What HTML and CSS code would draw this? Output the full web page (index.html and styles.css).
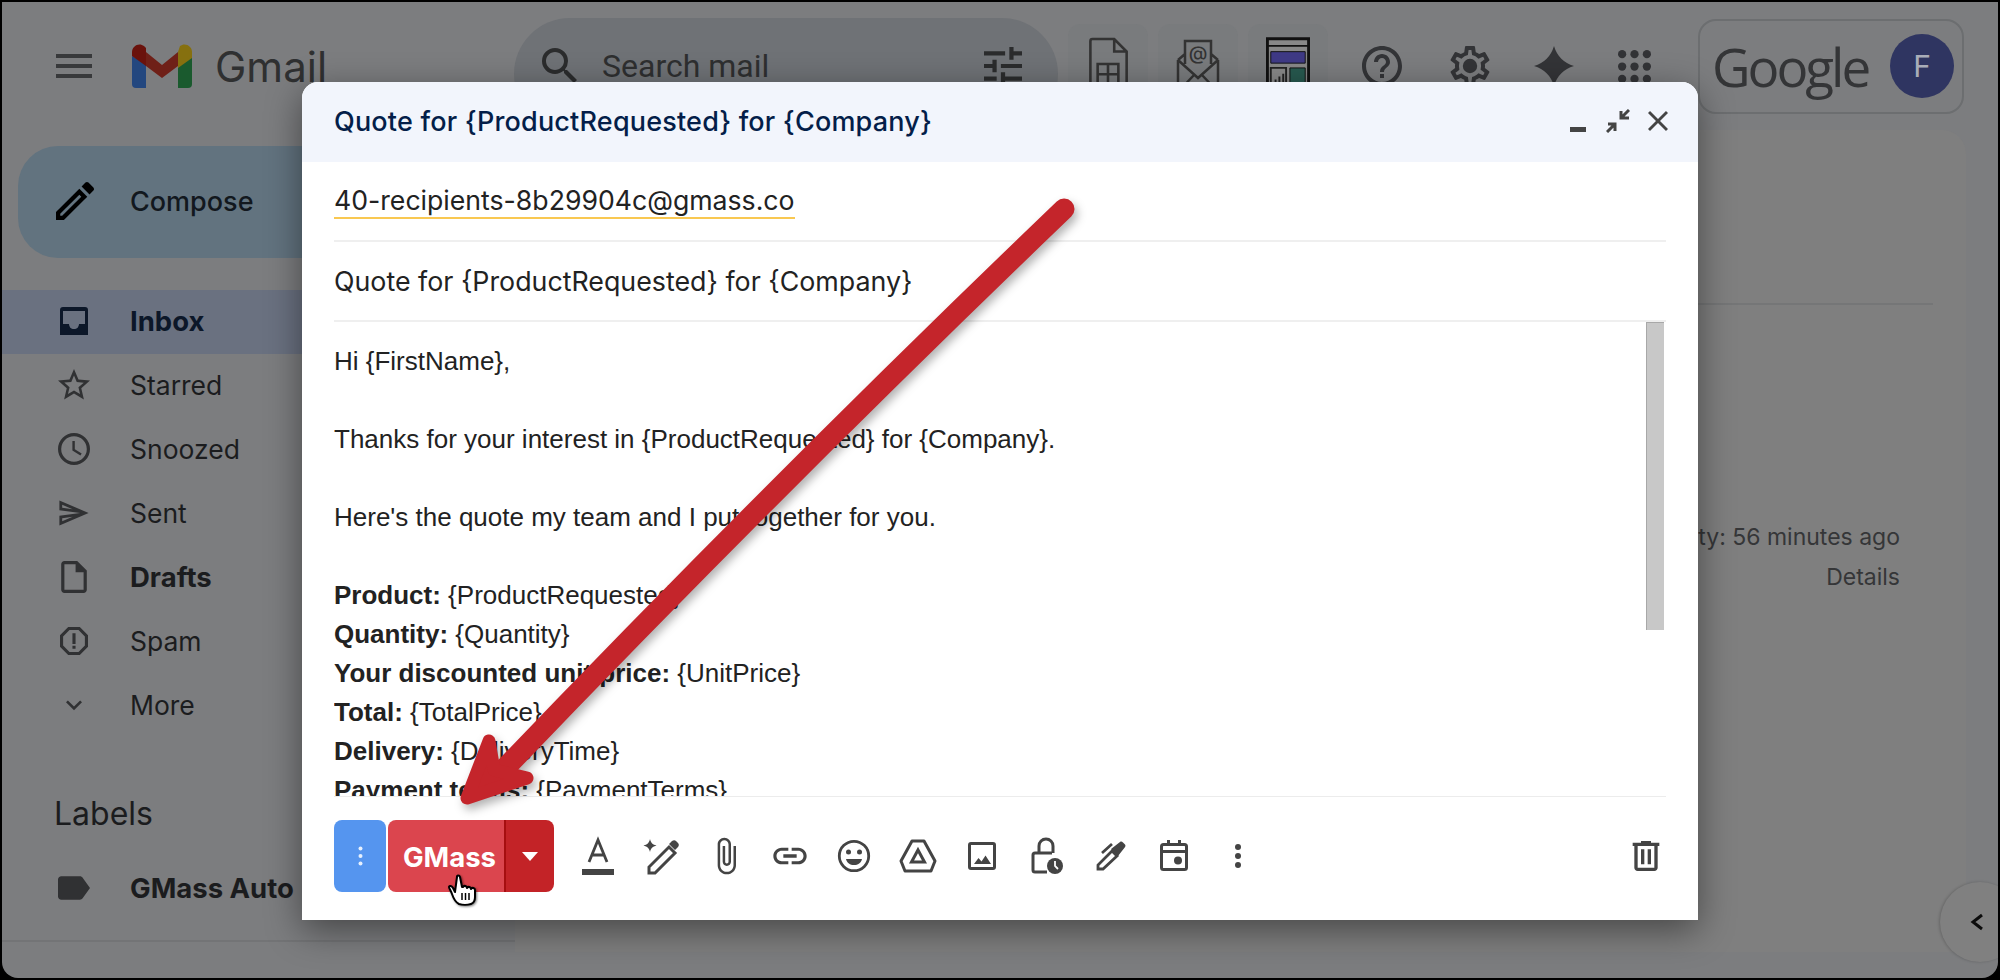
FILE: index.html
```html
<!DOCTYPE html>
<html lang="en">
<head>
    <meta charset="UTF-8">
    <title>Gmail - Quote for {ProductRequested}</title>
    <link rel="stylesheet" href="styles.css">
</head>
<body>
<div class="window">
    <header class="topbar">
        <div class="brand">
            <svg class="menu-icon" viewBox="0 0 36 24"><path d="M0 0h36v4H0zM0 10h36v4H0zM0 20h36v4H0z"/></svg>
            <svg class="gmail-logo" viewBox="0 0 60 44">
                <path fill="#23477f" d="M0 12v28a4 4 0 0 0 4 4h10V20z"/>
                <path fill="#1a5a2e" d="M60 12v28a4 4 0 0 1-4 4H46V20z"/>
                <path fill="#86700f" d="M46 8v16L60 14V8C60 2 53-2 48 2z"/>
                <path fill="#6f2018" d="M14 8 30 21 46 8v14L30 34 14 22z"/>
                <path fill="#6a120c" d="M0 8c0-6 7-10 12-6l2 2v18L0 12z"/>
            </svg>
            <span class="gmail-word">Gmail</span>
        </div>
        <div class="search">
            <svg class="search-icon" viewBox="3 3 18 18"><path d="M15.5 14h-.79l-.28-.27A6.471 6.471 0 0 0 16 9.5 6.5 6.5 0 1 0 9.5 16c1.61 0 3.09-.59 4.23-1.57l.27.28v.79l5 4.99L20.49 19l-4.99-5zm-6 0C7.01 14 5 11.99 5 9.5S7.01 5 9.5 5 14 7.01 14 9.5 11.99 14 9.5 14z"/></svg>
            <span class="search-text">Search mail</span>
            <svg class="tune-icon" viewBox="3 3 18 18"><path d="M3 17v2h6v-2H3zM3 5v2h10V5H3zm10 16v-2h8v-2h-8v-2h-2v6h2zM7 9v2H3v2h4v2h2V9H7zm14 4v-2H11v2h10zm-6-4h2V7h4V5h-4V3h-2v6z"/></svg>
        </div>
        <div class="addons">
            <div class="addon">
                <svg viewBox="0 0 40 56" class="addon-icon"><path fill="none" stroke="#333" stroke-width="2.5" d="M5 2h21l12 12v38a2 2 0 0 1-2 2H5a2 2 0 0 1-2-2V4a2 2 0 0 1 2-2zM26 2v12h12"/><path fill="none" stroke="#333" stroke-width="2.5" d="M10 26h20v20H10zM10 36h20M20 26v20"/></svg>
            </div>
            <div class="addon">
                <svg viewBox="0 0 44 56" class="addon-icon"><path fill="none" stroke="#333" stroke-width="2.5" d="M9 26V3h26v23M2 22l7-6M42 22l-7-6M2 22v32h40V22M2 22l20 18 20-18M2 54l16-17M42 54 26 37"/><text x="22" y="22" class="addon-at">@</text></svg>
            </div>
            <div class="addon">
                <svg viewBox="0 0 46 60" class="addon-icon"><path fill="#888" stroke="#111" stroke-width="3" d="M1.500 1.500h43v57h-43z"/><path fill="none" stroke="#111" stroke-width="2" d="M2 9h42"/><path fill="#3f3a86" stroke="#111" stroke-width="1" d="M5 15h36v12H5z"/><path fill="#27594f" stroke="#111" stroke-width="1" d="M25 32h16v24H25z"/><path fill="none" stroke="#222" stroke-width="2" d="M5 32h16v24H5zM10 50v-6M14 50v-9M18 50v-12"/></svg>
            </div>
        </div>
        <div class="tools">
            <div class="tool">
                <svg viewBox="2 2 20 20"><path d="M11 18h2v-2h-2v2zm1-16C6.480 2 2 6.480 2 12s4.480 10 10 10 10-4.480 10-10S17.520 2 12 2zm0 18c-4.410 0-8-3.590-8-8s3.590-8 8-8 8 3.590 8 8-3.590 8-8 8zm0-14c-2.210 0-4 1.790-4 4h2c0-1.100.9-2 2-2s2 .9 2 2c0 2-3 1.750-3 5h2c0-2.250 3-2.500 3-5 0-2.210-1.790-4-4-4z"/></svg>
            </div>
            <div class="tool tool-gear">
                <svg viewBox="2 2 20 20"><path d="M19.430 12.980c.04-.32.07-.64.07-.98 0-.34-.03-.66-.07-.98l2.110-1.650c.19-.15.24-.42.12-.64l-2-3.460c-.09-.16-.26-.25-.44-.25-.06 0-.12.01-.17.03l-2.490 1c-.52-.4-1.080-.73-1.690-.98l-.38-2.650C14.460 2.180 14.250 2 14 2h-4c-.25 0-.46.18-.49.42l-.38 2.650c-.61.25-1.170.59-1.690.98l-2.490-1c-.06-.02-.12-.03-.18-.03-.17 0-.34.09-.43.25l-2 3.460c-.13.22-.07.49.12.64l2.110 1.650c-.04.32-.07.65-.07.98 0 .33.03.66.07.98l-2.110 1.650c-.19.15-.24.42-.12.64l2 3.460c.09.16.26.25.44.25.06 0 .12-.01.17-.03l2.490-1c.52.4 1.080.73 1.690.98l.38 2.650c.03.24.24.42.49.42h4c.25 0 .46-.18.49-.42l.38-2.650c.61-.25 1.170-.59 1.690-.98l2.490 1c.06.02.12.03.18.03.17 0 .34-.09.43-.25l2-3.460c.12-.22.07-.49-.12-.64l-2.110-1.650zm-1.980-1.710c.04.31.05.52.05.73 0 .21-.02.43-.05.73l-.14 1.130.89.7 1.080.84-.7 1.210-1.270-.51-1.040-.42-.9.68c-.43.32-.84.56-1.250.73l-1.060.43-.16 1.130-.2 1.350h-1.400l-.19-1.350-.16-1.130-1.060-.43c-.43-.18-.83-.41-1.230-.71l-.91-.7-1.060.43-1.270.51-.7-1.210 1.080-.84.89-.7-.14-1.130c-.03-.31-.05-.54-.05-.74s.02-.43.05-.73l.14-1.130-.89-.7-1.080-.84.7-1.210 1.270.51 1.040.42.9-.68c.43-.32.84-.56 1.250-.73l1.060-.43.16-1.130.2-1.350h1.390l.19 1.350.16 1.130 1.060.43c.43.18.83.41 1.230.71l.91.7 1.060-.43 1.270-.51.7 1.210-1.070.85-.89.7.14 1.130z"/><circle cx="12" cy="12" r="3.600"/></svg>
            </div>
            <div class="tool">
                <svg viewBox="2 2 20 20"><path d="M12 2Q14.300 9.700 22 12 14.300 14.300 12 22 9.700 14.300 2 12 9.700 9.700 12 2z"/></svg>
            </div>
            <div class="tool tool-apps">
                <svg class="apps-icon" viewBox="0 0 32 32"><circle cx="4" cy="4" r="4"/><circle cx="16" cy="4" r="4"/><circle cx="28" cy="4" r="4"/><circle cx="4" cy="16" r="4"/><circle cx="16" cy="16" r="4"/><circle cx="28" cy="16" r="4"/><circle cx="4" cy="28" r="4"/><circle cx="16" cy="28" r="4"/><circle cx="28" cy="28" r="4"/></svg>
            </div>
        </div>
        <div class="account">
            <span class="google-word">Google</span>
            <span class="avatar">F</span>
        </div>
    </header>

    <div class="content">
        <aside class="sidebar">
            <div class="compose">
                <svg viewBox="3 3 18 18"><path d="M3 17.250V21h3.750L17.810 9.940l-3.750-3.750L3 17.250zM5.920 19H5v-.92l9.060-9.060.92.92L5.920 19zM20.710 5.630l-2.340-2.340c-.2-.2-.45-.29-.71-.29s-.51.1-.7.29l-1.830 1.830 3.750 3.750 1.830-1.830c.39-.39.39-1.020 0-1.410z"/></svg>
                <span>Compose</span>
            </div>
            <nav class="nav">
                <div class="nav-row nav-active">
                    <svg viewBox="0 0 28 28"><path fill-rule="evenodd" d="M3 0h22a3 3 0 0 1 3 3v22a3 3 0 0 1-3 3H3a3 3 0 0 1-3-3V3a3 3 0 0 1 3-3zM3 4v14h6c0 3 2 5 5 5s5-2 5-5h6V4z"/><path d="M0 17h9c0 3 2 5 5 5s5-2 5-5h9v11H0z"/></svg>
                    <span>Inbox</span>
                </div>
                <div class="nav-row">
                    <svg viewBox="2 2 20 20"><path d="M22 9.240l-7.190-.62L12 2 9.190 8.630 2 9.240l5.460 4.730L5.820 21 12 17.270 18.180 21l-1.630-7.030L22 9.240zM12 15.400l-3.760 2.270 1-4.280-3.320-2.880 4.380-.38L12 6.100l1.710 4.040 4.380.38-3.320 2.880 1 4.280L12 15.400z"/></svg>
                    <span>Starred</span>
                </div>
                <div class="nav-row">
                    <svg viewBox="2 2 20 20"><path d="M12 2a10 10 0 1 0 0 20 10 10 0 0 0 0-20zm0 18a8 8 0 1 1 0-16 8 8 0 0 1 0 16zm.5-13H11v6l5 3 .8-1.200-4.300-2.600z"/></svg>
                    <span>Snoozed</span>
                </div>
                <div class="nav-row">
                    <svg viewBox="1 2 23 20"><path d="M4.010 6.030l7.510 3.220-7.520-1 .01-2.220m7.500 8.720L4 17.970v-2.220l7.510-1M2.010 3L2 10l15 2-15 2 .01 7L23 12 2.010 3z"/></svg>
                    <span>Sent</span>
                </div>
                <div class="nav-row nav-bold">
                    <svg viewBox="2 2 20 20"><path d="M6 2c-1.100 0-2 .9-2 2v16c0 1.100.9 2 2 2h12c1.100 0 2-.9 2-2V8l-6-6H6zm0 18V4h7v5h5v11H6z"/></svg>
                    <span>Drafts</span>
                </div>
                <div class="nav-row">
                    <svg viewBox="3 3 18 18" class="nav-icon-small"><path d="M15.730 3H8.270L3 8.270v7.460L8.270 21h7.460L21 15.730V8.270L15.730 3zM19 14.900 14.900 19H9.100L5 14.900V9.100L9.100 5h5.800L19 9.100v5.800zM11 7h2v7h-2zm0 8h2v2h-2z"/></svg>
                    <span>Spam</span>
                </div>
                <div class="nav-row">
                    <svg viewBox="0 0 24 24"><path d="M7.410 8.590 12 13.170l4.590-4.580L18 10l-6 6-6-6z"/></svg>
                    <span>More</span>
                </div>
            </nav>
            <div class="labels-title">Labels</div>
            <div class="nav-row nav-bold">
                <svg viewBox="3 5 19 14" class="label-icon"><path d="M17.630 5.840C17.270 5.330 16.670 5 16 5L5 5.010C3.900 5.010 3 5.900 3 7v10c0 1.100.9 1.990 2 1.990L16 19c.67 0 1.270-.33 1.630-.84L22 12l-4.370-6.160z"/></svg>
                <span>GMass Auto</span>
            </div>
            <div class="sidebar-foot"></div>
        </aside>
        <main class="mail-card">
            <div class="mail-rule"></div>
            <div class="mail-meta">
                <div>Last account activity: 56 minutes ago</div>
                <div>Details</div>
            </div>
        </main>
    </div>

    <div class="side-toggle">
        <svg viewBox="0 0 14 18"><path fill="none" stroke="#0c0c0c" stroke-width="3" d="M12 2 3 9l9 7"/></svg>
    </div>

    <section class="modal">
        <div class="modal-head">
            <span class="modal-title">Quote for {ProductRequested} for {Company}</span>
            <div class="modal-actions">
                <svg class="act-min" viewBox="0 0 16 5"><path d="M0 0h16v5H0z"/></svg>
                <svg class="act-collapse" viewBox="0 0 24 24"><path fill="none" stroke="#444" stroke-width="3" d="M23 1 15 9M15 2v7h8M1 23l8-8M9 22v-7H2"/></svg>
                <svg class="act-close" viewBox="5 5 14 14"><path d="M19 6.410 17.590 5 12 10.590 6.410 5 5 6.410 10.590 12 5 17.590 6.410 19 12 13.410 17.590 19 19 17.590 13.410 12z"/></svg>
            </div>
        </div>
        <div class="field">
            <span class="recipient">40-recipients-8b29904c@gmass.co</span>
        </div>
        <div class="field">
            <span>Quote for {ProductRequested} for {Company}</span>
        </div>
        <div class="body-row">
            <div class="message">
                <p>Hi {FirstName},</p>
                <p>Thanks for your interest in {ProductRequested} for {Company}.</p>
                <p>Here's the quote my team and I put together for you.</p>
                <p>
                    <b>Product:</b> {ProductRequested}<br>
                    <b>Quantity:</b> {Quantity}<br>
                    <b>Your discounted unit price:</b> {UnitPrice}<br>
                    <b>Total:</b> {TotalPrice}<br>
                    <b>Delivery:</b> {DeliveryTime}<br>
                    <b>Payment terms:</b> {PaymentTerms}
                </p>
            </div>
            <div class="scrollbar"></div>
        </div>
        <div class="toolbar">
            <div class="btn-more">
                <svg viewBox="0 0 5 20"><circle cx="2.500" cy="2.500" r="2"/><circle cx="2.500" cy="10" r="2"/><circle cx="2.500" cy="17.500" r="2"/></svg>
            </div>
            <div class="btn-gmass">
                <span class="gmass-label">GMass</span>
                <span class="gmass-caret"><svg viewBox="0 0 16 9"><path d="M0 0h16L8 9z"/></svg></span>
            </div>
            <div class="tb-icons">
                <span class="tb-icon">
                    <svg viewBox="0 0 40 40"><path fill="#444" d="M4 33h32v6H4z"/><path fill="none" stroke="#444" stroke-width="2.800" d="M11 26 20 4l9 22M14 19h12"/></svg>
                </span>
                <span class="tb-icon">
                    <svg viewBox="0 0 40 40"><path fill="#444" d="M8 3c1 4 2.500 5.500 6.500 6.500C10.500 10.500 9 12 8 16 7 12 5.500 10.500 1.500 9.500 5.500 8.500 7 7 8 3z"/><path fill="none" stroke="#444" stroke-width="3" d="M7 37v-6L27 11l6 6-20 20z"/><path fill="#444" d="M30 5c1.500-1 3-1 4 0l2 2c1.200 1.200 1 3 0 4l-3 3-6-6z"/></svg>
                </span>
                <span class="tb-icon">
                    <svg viewBox="0 0 24 24"><path fill="#444" d="M16.500 6v11.500c0 2.210-1.790 4-4 4s-4-1.790-4-4V5c0-1.380 1.120-2.500 2.500-2.500s2.500 1.120 2.500 2.500v10.500c0 .55-.45 1-1 1s-1-.45-1-1V6H10v9.500c0 1.380 1.120 2.500 2.500 2.500s2.500-1.120 2.500-2.500V5c0-2.210-1.790-4-4-4S7 2.790 7 5v12.500c0 3.040 2.460 5.500 5.500 5.500s5.500-2.460 5.500-5.500V6h-1.500z"/></svg>
                </span>
                <span class="tb-icon">
                    <svg viewBox="0 0 24 24"><path fill="#444" d="M3.900 12c0-1.710 1.390-3.100 3.100-3.100h4V7H7c-2.760 0-5 2.240-5 5s2.240 5 5 5h4v-1.900H7c-1.710 0-3.100-1.390-3.100-3.100zM8 13h8v-2H8v2zm9-6h-4v1.900h4c1.710 0 3.100 1.390 3.100 3.100s-1.390 3.100-3.100 3.100h-4V17h4c2.760 0 5-2.240 5-5s-2.240-5-5-5z"/></svg>
                </span>
                <span class="tb-icon">
                    <svg viewBox="0 0 40 40"><circle cx="20" cy="20" r="14.700" fill="none" stroke="#444" stroke-width="2.800"/><circle cx="14.500" cy="16" r="2.500" fill="#444"/><circle cx="25.500" cy="16" r="2.500" fill="#444"/><path fill="#444" d="M12 23h16c-1 4-4 6-8 6s-7-2-8-6z"/></svg>
                </span>
                <span class="tb-icon">
                    <svg viewBox="0 0 40 40"><path fill="none" stroke="#444" stroke-width="3" stroke-linejoin="round" d="M14 5h12l11 20-4 10H7L3 25z"/><path fill="none" stroke="#444" stroke-width="3" d="M20 14l6.500 12h-13z"/></svg>
                </span>
                <span class="tb-icon">
                    <svg viewBox="0 0 40 40"><rect x="7.500" y="7.500" width="25" height="25" rx="1.500" fill="none" stroke="#444" stroke-width="3"/><path fill="#444" d="M12 28l4.500-6 3 3.500 4-6L29 28z"/></svg>
                </span>
                <span class="tb-icon">
                    <svg viewBox="0 0 40 40"><path fill="none" stroke="#444" stroke-width="3" d="M13 17v-7a7 7 0 0 1 14 0v7M26 17H9a2 2 0 0 0-2 2v15a2 2 0 0 0 2 2h12"/><circle cx="29" cy="30" r="8" fill="#444"/><path fill="none" stroke="#fff" stroke-width="1.800" d="M29 25v5l3 3"/></svg>
                </span>
                <span class="tb-icon">
                    <svg viewBox="0 0 40 40"><path fill="none" stroke="#444" stroke-width="2.800" d="M8 33v-4L22 15l5 5-14 13zM12 17l10-9"/><path fill="#444" d="M21 13l9-7c1-.7 2-.5 3 .5l2 2c.8 1 .5 2-.3 3L28 20z"/></svg>
                </span>
                <span class="tb-icon">
                    <svg viewBox="0 0 40 40"><rect x="7.500" y="8.500" width="25" height="25" rx="2" fill="none" stroke="#444" stroke-width="3"/><path fill="#444" d="M7 14h26v3H7zM13 4h3v6h-3zM24 4h3v6h-3z"/><circle cx="24" cy="24.500" r="4" fill="#444"/></svg>
                </span>
                <span class="tb-icon">
                    <svg viewBox="0 0 40 40"><circle cx="20" cy="11" r="3" fill="#444"/><circle cx="20" cy="20" r="3" fill="#444"/><circle cx="20" cy="29" r="3" fill="#444"/></svg>
                </span>
            </div>
            <span class="tb-icon tb-trash">
                <svg viewBox="0 0 24 24"><path fill="#444" d="M15 4V3H9v1H4v2h1v13c0 1.100.9 2 2 2h10c1.100 0 2-.9 2-2V6h1V4h-5zm2 15H7V6h10v13zM9 8h2v9H9zm4 0h2v9h-2z"/></svg>
            </span>
        </div>
    </section>

    <svg class="annotation" viewBox="0 0 1996 976">
        <path fill="none" stroke="#c4252b" stroke-width="21" stroke-linecap="round" d="M1062 207Q767 490 486 784"/>
        <path fill="#c4252b" stroke="#c4252b" stroke-width="13" stroke-linejoin="round" d="M487 739 465 796 525 776 492 768z"/>
    </svg>

    <svg class="hand" viewBox="0 0 32 34">
        <path fill="#fff" stroke="#000" stroke-width="2" stroke-linejoin="round" d="M8 19 6 15c-1-2 -4-3-4-1 0 1 2 4 3 7 1 3 3 8 7 10 3 1 9 1 12 0 3-1 4-3 4-7v-7c0-2-3-3-4-1 0-2-3-3-4-1 0-2-3-3-4-1l-1 0-2-10c-.5-2-3.500-2-3 0z"/>
        <path fill="none" stroke="#000" stroke-width="1.500" d="M15 20v7M18.500 20v7M22 20v7"/>
    </svg>
</div>
</body>
</html>
```

FILE: styles.css
```css
* {
    box-sizing: border-box;
}
body {
    margin: 0;
    background: #000;
    font-family: Inter, "Noto Sans", sans-serif;
}
.window {
    position: relative;
    width: 1996px;
    height: 976px;
    margin: 2px 0 0 2px;
    background: #7c7d7f;
    border-radius: 0 0 16px 16px;
    overflow: hidden;
}

/* top bar */
.topbar {
    display: flex;
    align-items: center;
    height: 128px;
    padding-top: 16px;
    padding-bottom: 16px;
}
.brand {
    display: flex;
    align-items: center;
    width: 512px;
    padding-left: 54px;
}
.menu-icon {
    width: 36px;
    height: 24px;
    fill: #38393b;
}
.gmail-logo {
    width: 60px;
    height: 44px;
    margin-left: 40px;
}
.gmail-word {
    margin-left: 23px;
    font-size: 42px;
    color: #2f3031;
}
.search {
    display: flex;
    align-items: center;
    align-self: flex-start;
    flex: none;
    width: 544px;
    height: 112px;
    padding: 0 36px 16px 28px;
    background: #6f7276;
    border-radius: 56px;
}
.search-icon {
    width: 36px;
    height: 36px;
    fill: #2b2c2d;
}
.search-text {
    margin-left: 24px;
    font-size: 32px;
    color: #2e2f30;
    font-family: Roboto, sans-serif;
}
.tune-icon {
    width: 38px;
    height: 38px;
    margin-left: auto;
    fill: #2b2c2d;
}
.addons {
    display: flex;
    gap: 10px;
    margin-left: 10px;
}
.addon {
    display: flex;
    justify-content: center;
    align-items: center;
    width: 80px;
    height: 84px;
    background: #797b7d;
    border-radius: 12px;
}
.addon-icon {
    width: 44px;
    height: 58px;
}
.addon-at {
    fill: #333;
    font-size: 19px;
    font-weight: 500;
    text-anchor: middle;
}
.tools {
    display: flex;
    margin-left: 12px;
}
.tool {
    display: flex;
    justify-content: center;
    align-items: center;
    width: 84px;
}
.tool svg {
    width: 40px;
    height: 40px;
    fill: #333437;
}
.tool-gear {
    margin-left: 4px;
}
.tool-apps {
    margin-left: -4px;
}
.tool .apps-icon {
    width: 33px;
    height: 33px;
}
.account {
    display: flex;
    align-items: center;
    flex: none;
    width: 266px;
    height: 95px;
    margin-left: 22px;
    padding: 0 8px 0 12px;
    border: 2px solid #6c6e70;
    border-radius: 18px;
}
.google-word {
    font-size: 53px;
    font-weight: 500;
    letter-spacing: -3px;
    color: #343537;
    font-family: "Open Sans", sans-serif;
}
.avatar {
    display: flex;
    justify-content: center;
    align-items: center;
    width: 64px;
    height: 64px;
    margin-left: auto;
    background: #2f3561;
    border-radius: 50%;
    color: #a9adb8;
    font-size: 30px;
}

/* under the top bar */
.content {
    display: flex;
    height: 848px;
}
.sidebar {
    flex: none;
    width: 513px;
    padding-top: 16px;
}
.compose {
    display: flex;
    align-items: center;
    width: 400px;
    height: 112px;
    margin-left: 16px;
    padding: 0 0 2px 38px;
    background: #62737f;
    border-radius: 40px;
    color: #12181e;
    font-size: 27px;
    font-weight: 500;
}
.compose svg {
    width: 38px;
    height: 38px;
    fill: #000;
}
.compose span {
    margin-left: 36px;
}
.nav {
    margin-top: 32px;
}
.nav-row {
    display: flex;
    align-items: center;
    height: 64px;
    padding: 0 0 2px 56px;
    color: #1b1c1e;
    font-size: 26.500px;
}
.nav-row svg {
    flex: none;
    width: 32px;
    height: 32px;
    fill: #303133;
}
.nav-row .nav-icon-small {
    width: 28px;
    height: 28px;
    margin: 0 2px;
}
.nav-row span {
    margin-left: 40px;
}
.nav-active {
    background: #6a7180;
    color: #0c1729;
    font-weight: 700;
    font-size: 27.500px;
}
.nav-active svg {
    width: 28px;
    height: 28px;
    margin: 0 2px;
    fill: #0c1729;
}
.nav-bold {
    font-weight: 700;
    font-size: 27.500px;
}
.labels-title {
    margin: 58px 0 0 52px;
    font-size: 32px;
    line-height: 36px;
    color: #1b1c1e;
}
.sidebar .label-icon {
    width: 32px;
    height: 24px;
}
.labels-title + .nav-row {
    margin-top: 25px;
}
.sidebar-foot {
    height: 21px;
    border-bottom: 2px solid #737476;
}
.mail-card {
    flex: 1;
    margin-right: 32px;
    margin-bottom: 26px;
    padding-top: 173px;
    background: #7f7f7f;
    border-radius: 24px 24px 0 0;
    color: #353638;
    font-size: 23px;
    text-align: right;
}
.mail-rule {
    height: 2px;
    margin-right: 33px;
    background: #757677;
}
.mail-meta {
    margin: 212px 66px 0 0;
    line-height: 40px;
}
.side-toggle {
    position: absolute;
    right: -22px;
    top: 880px;
    display: flex;
    align-items: center;
    width: 80px;
    height: 80px;
    padding-left: 30px;
    background: #808080;
    border-radius: 50%;
    box-shadow: -1px 0 3px rgba(0, 0, 0, 0.2);
}
.side-toggle svg {
    width: 14px;
    height: 18px;
}

/* compose window */
.modal {
    position: absolute;
    left: 300px;
    top: 80px;
    display: flex;
    flex-direction: column;
    width: 1396px;
    height: 838px;
    background: #fff;
    border-radius: 16px 16px 0 0;
    box-shadow: 0 10px 36px rgba(0, 0, 0, 0.45);
    overflow: hidden;
    color: #222;
}
.modal-head {
    display: flex;
    align-items: center;
    flex: none;
    height: 80px;
    padding: 0 30px 2px 32px;
    background: #f2f5fc;
}
.modal-title {
    font-size: 27px;
    font-weight: 500;
    letter-spacing: 0.190px;
    color: #041e49;
}
.modal-actions {
    display: flex;
    align-items: flex-start;
    height: 24px;
    margin-left: auto;
}
.act-min {
    width: 16px;
    height: 5px;
    margin-top: 18px;
    fill: #444;
}
.act-collapse {
    width: 24px;
    height: 24px;
    margin-left: 20px;
}
.act-close {
    width: 20px;
    height: 20px;
    margin: 2px 0 0 18px;
    fill: #444;
}
.field {
    display: flex;
    align-items: center;
    flex: none;
    height: 80px;
    margin: 0 32px;
    border-bottom: 2px solid #efefef;
    font-size: 26.800px;
}
.recipient {
    margin-top: -1px;
    line-height: 34px;
    border-bottom: 2px solid #f9c851;
    font-size: 26.650px;
}
.body-row {
    display: flex;
    flex: none;
    height: 475px;
    margin: 0 34px 0 32px;
    overflow: hidden;
}
.message {
    flex: 1;
    padding-top: 20px;
    font-family: "Liberation Sans", Arial, sans-serif;
    font-size: 26px;
    line-height: 39px;
    color: #222;
}
.message p {
    margin: 0 0 39px;
    white-space: nowrap;
}
.scrollbar {
    flex: none;
    width: 18px;
    height: 308px;
    background: #c8c8c8;
    border-left: 1px solid #a8a8a8;
    border-top: 1px solid #a8a8a8;
}
.toolbar {
    display: flex;
    align-items: flex-start;
    flex: 1;
    margin: 0 32px;
    padding-top: 23px;
    box-shadow: 0 -1px 0 #ececec;
}
.btn-more {
    display: flex;
    justify-content: center;
    align-items: center;
    width: 52px;
    height: 72px;
    background: #5595ef;
    border-radius: 8px;
}
.btn-more svg {
    width: 5px;
    height: 20px;
    fill: #e6f0fd;
}
.btn-gmass {
    display: flex;
    width: 166px;
    height: 72px;
    margin-left: 2px;
    border-radius: 8px;
    overflow: hidden;
    color: #fff;
}
.gmass-label {
    display: flex;
    justify-content: center;
    align-items: center;
    width: 116px;
    padding: 1px 0 0 7px;
    background: #db454e;
    font-size: 27.500px;
    font-weight: 700;
    font-family: Inter, sans-serif;
}
.gmass-caret {
    display: flex;
    flex: 1;
    justify-content: center;
    align-items: center;
    background: #c32327;
    border-left: 2px solid #a60e10;
}
.gmass-caret svg {
    width: 16px;
    height: 9px;
    fill: #fff;
}
.tb-icons {
    display: flex;
    align-items: center;
    height: 72px;
    margin-left: 12px;
}
.tb-icon {
    display: flex;
    justify-content: center;
    align-items: center;
    width: 64px;
    height: 72px;
}
.tb-icon svg {
    width: 40px;
    height: 40px;
}
.tb-trash {
    width: 40px;
    margin-left: auto;
}

/* things drawn over the screenshot */
.annotation {
    position: absolute;
    left: 0;
    top: 0;
    width: 1996px;
    height: 976px;
    filter: drop-shadow(3px 5px 5px rgba(0, 0, 0, 0.3));
    pointer-events: none;
}
.hand {
    position: absolute;
    left: 445px;
    top: 871px;
    width: 32px;
    height: 34px;
    filter: drop-shadow(1px 1px 1px rgba(0, 0, 0, 0.5));
}
```
